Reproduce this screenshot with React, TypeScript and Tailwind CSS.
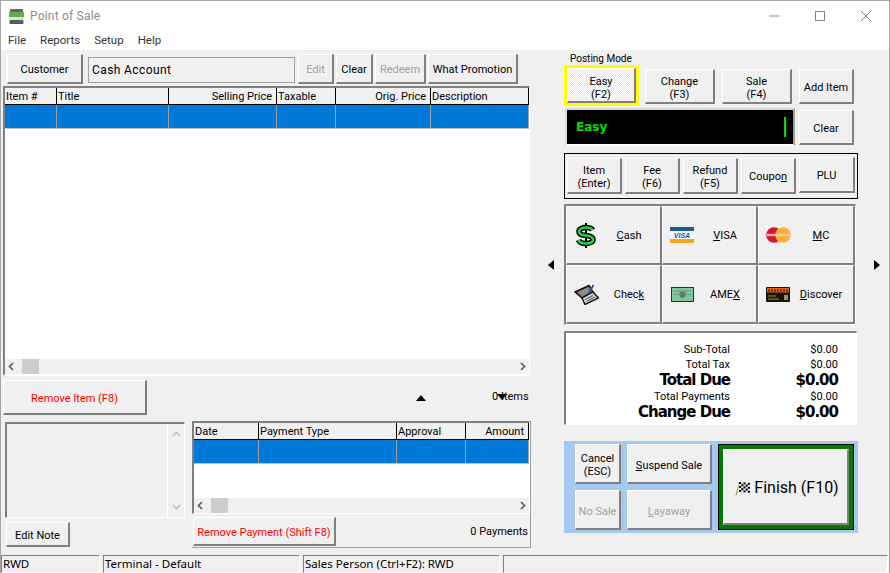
import React from "react";

const raised = "border-t border-l border-b-2 border-r-2 border-t-white border-l-white border-b-[#808080] border-r-[#808080] bg-[#f0f0f0]";
const sunken = "border-t-2 border-l-2 border-b border-r border-t-[#808080] border-l-[#808080] border-b-white border-r-white";

function Btn({ className = "", children, disabled, red }: { className?: string; children: React.ReactNode; disabled?: boolean; red?: boolean }) {
  return (
    <div className={`${raised} flex shrink-0 flex-col items-center justify-center whitespace-nowrap text-center leading-[13px] ${disabled ? "text-[#a0a0a0]" : red ? "text-[#ff0000]" : "text-black"} ${className}`}>
      {children}
    </div>
  );
}

function Chevron({ dir, color = "#606060" }: { dir: "l" | "r" | "u" | "d"; color?: string }) {
  const d = { l: "M6 1 L2.5 4.5 L6 8", r: "M3 1 L6.5 4.5 L3 8", u: "M1 6 L4.5 2.5 L8 6", d: "M1 3 L4.5 6.5 L8 3" }[dir];
  return (
    <svg width="9" height="9" viewBox="0 0 9 9" className="shrink-0">
      <path d={d} fill="none" stroke={color} strokeWidth="1.7" />
    </svg>
  );
}

function HScroll() {
  return (
    <div className="flex h-[15px] shrink-0 items-center bg-[#f0f0f0]">
      <div className="flex w-[17px] justify-center pr-1"><Chevron dir="l" /></div>
      <div className="h-[15px] w-[17px] bg-[#cdcdcd]" />
      <div className="flex-1" />
      <div className="flex w-[17px] justify-center pl-1"><Chevron dir="r" /></div>
    </div>
  );
}

function GridTable({ cols, bodyH }: { cols: { t: string; w: number; right?: boolean }[]; bodyH: number }) {
  return (
    <div className="flex min-h-0 flex-1 flex-col bg-white">
      <div className="flex h-[17px] shrink-0 border-b border-black bg-[#f0f0f0] text-[11px]">
        {cols.map((c) => (
          <div key={c.t} style={{ width: c.w }} className={`overflow-hidden border-r border-r-black pt-[1px] pr-[4px] pl-[1px] leading-[16px] whitespace-nowrap ${c.right ? "text-right" : ""}`}>
            {c.t}
          </div>
        ))}
      </div>
      <div style={{ height: bodyH }} className="flex shrink-0 border-b border-[#c0c0c0] bg-[#0078d7]">
        {cols.map((c) => (
          <div key={c.t} style={{ width: c.w }} className="border-r border-r-[#a0a0a0]" />
        ))}
      </div>
      <div className="flex-1" />
    </div>
  );
}

function DollarIcon() {
  const s = "M17.5 7C16.5 5 14 4.5 11 4.5C7 4.5 4 6 4 8.5C4 11.5 7 12 11 12.5C15 13 18 14 18 16.5C18 19 15 20.5 11 20.5C7 20.5 4.5 19.5 3.5 17";
  return (
    <svg width="22" height="25" viewBox="0 0 22 25">
      <path d="M11 0V25" stroke="#000" strokeWidth="2" />
      <path d={s} fill="none" stroke="#000" strokeWidth="5.5" />
      <path d={s} fill="none" stroke="#18d83c" strokeWidth="2.6" />
    </svg>
  );
}
function VisaIcon() {
  return (
    <svg width="24" height="16" viewBox="0 0 24 16">
      <rect width="24" height="16" fill="#f4f6f8" />
      <rect width="24" height="4" fill="#1a5a96" />
      <rect y="12" width="24" height="4" fill="#f2a71e" />
      <text x="12" y="11" textAnchor="middle" fontSize="7" fontWeight="700" fontStyle="italic" fill="#1a5a96" fontFamily="Liberation Sans, sans-serif">VISA</text>
    </svg>
  );
}
function McIcon() {
  return (
    <svg width="25" height="16" viewBox="0 0 25 16">
      <circle cx="8" cy="8" r="7.8" fill="#d8143a" />
      <circle cx="17" cy="8" r="7.8" fill="#fbb12e" />
      <rect x="1" y="6.8" width="23" height="2.4" fill="#f7c8b8" opacity="0.85" />
    </svg>
  );
}
function CheckIcon() {
  return (
    <svg width="25" height="21" viewBox="0 0 25 21">
      <path d="M1 8L15 1.5L19 8L8 14Z" fill="#6a6a6a" stroke="#111" strokeWidth="1.4" />
      <path d="M4 8L14 3.5L16.5 7.5L8 12Z" fill="#8f8f8f" />
      <path d="M8 14L19 8L24.5 14L11 20.5Z" fill="#cfcfcf" stroke="#111" strokeWidth="1.4" />
      <path d="M11 15.5L19 11.5M13 17L21 13" stroke="#555" />
      <path d="M19.5 1L14.5 9.5" stroke="#2b55b5" strokeWidth="1.8" />
    </svg>
  );
}
function AmexIcon() {
  return (
    <svg width="23" height="15" viewBox="0 0 23 15">
      <rect x="0.5" y="0.5" width="22" height="14" fill="#82c49a" stroke="#23372c" />
      <circle cx="11.5" cy="7.5" r="3.2" fill="#5d7f70" />
      <path d="M3 7.5H7.5M15.5 7.5H20M3 4H20" stroke="#5fa27c" />
    </svg>
  );
}
function DiscoverIcon() {
  return (
    <svg width="24" height="15" viewBox="0 0 24 15">
      <rect width="24" height="15" rx="1" fill="#1a1410" />
      <rect x="1" y="1" width="22" height="4.5" fill="#e0641e" />
      <path d="M3 2V5M6 2V5M9 2V5M12 2V5M15 2V5M18 2V5M21 2V5" stroke="#1a1410" />
      <rect x="18" y="8" width="4" height="5" fill="#8a9a70" />
      <path d="M2 9H10M2 12H13" stroke="#b08a40" />
    </svg>
  );
}
function FlagIcon() {
  const cells: React.ReactNode[] = [];
  for (let r = 0; r < 5; r++) for (let c = 0; c < 5; c++) if ((r + c) % 2 === 0) cells.push(<rect key={`${r}-${c}`} x={4 + c * 2.2} y={1 + r * 2 + c * 0.2} width="2.2" height="2" fill="#111" />);
  return (
    <svg width="15" height="15" viewBox="0 0 15 15">
      <path d="M1 14.5L4.5 1" stroke="#8a8a20" strokeWidth="1" />
      <path d="M4.2 1L15 2V12L2.8 10Z" fill="#e8e8e8" />
      {cells}
    </svg>
  );
}
function AppIcon() {
  return (
    <svg width="17" height="17" viewBox="0 0 17 17">
      <rect x="2" y="1" width="13" height="4" rx="1" fill="#666" />
      <rect x="1" y="4" width="15" height="5" fill="#5fb04a" />
      <rect x="1" y="9" width="15" height="3" fill="#e4e4b0" />
      <rect x="1.5" y="12" width="14" height="4" rx="1" fill="#50586a" />
      <rect x="9.5" y="12.5" width="5" height="2" fill="#3a66b0" />
    </svg>
  );
}

function PayCell({ icon, label }: { icon: React.ReactNode; label: React.ReactNode }) {
  return (
    <div className={`${raised} flex items-center`}>
      <div className="flex w-[38px] shrink-0 justify-center">{icon}</div>
      <div className="flex w-[48px] shrink-0 justify-center pt-[2px] whitespace-nowrap">{label}</div>
    </div>
  );
}

function TotalRow({ label, value, big }: { label: string; value: string; big?: boolean }) {
  return (
    <div className={`flex ${big ? "h-[17px] font-['DejaVu_Sans',sans-serif] text-[15px] leading-[17px] font-bold tracking-[-1px]" : "h-[15px] leading-[15px]"}`}>
      <div className="w-[164px] text-right whitespace-nowrap">{label}</div>
      <div className="w-[108px] text-right whitespace-nowrap">{value}</div>
    </div>
  );
}

const itemCols = [
  { t: "Item #", w: 52 },
  { t: "Title", w: 112 },
  { t: "Selling Price", w: 108, right: true },
  { t: "Taxable", w: 59 },
  { t: "Orig. Price", w: 95, right: true },
  { t: "Description", w: 98 },
];
const payCols = [
  { t: "Date", w: 65 },
  { t: "Payment Type", w: 138 },
  { t: "Approval", w: 69 },
  { t: "Amount", w: 63, right: true },
];

export default function App() {
  return (
    <div className="flex h-[573px] w-[890px] flex-col overflow-hidden border border-b-0 border-[#a6a6a6] bg-[#f0f0f0] font-['Roboto',sans-serif] text-[11px] text-black">
      {/* Title + menu */}
      <div className="h-[49px] shrink-0 bg-white">
        <div className="flex h-[30px] items-center pl-[7px]">
          <AppIcon />
          <span className="ml-[5px] text-[12px] tracking-[0.2px] text-[#8c8c8c]">Point of Sale</span>
          <div className="ml-auto flex items-center">
            <svg width="12" height="12" viewBox="0 0 12 12" className="mr-[34px]"><path d="M1 6H11" stroke="#888" /></svg>
            <svg width="12" height="12" viewBox="0 0 12 12" className="mr-[34px]"><rect x="1.5" y="1.5" width="9" height="9" fill="none" stroke="#888" /></svg>
            <svg width="12" height="12" viewBox="0 0 12 12" className="mr-[17px]"><path d="M1 1L11 11M11 1L1 11" stroke="#888" /></svg>
          </div>
        </div>
        <div className="flex h-[20px] items-center gap-[14px] pl-[7px] text-[11.5px] text-[#333]">
          <span>File</span><span>Reports</span><span>Setup</span><span>Help</span>
        </div>
      </div>

      {/* Main */}
      <div className="flex min-h-0 flex-1">
        {/* Left */}
        <div className="ml-[2px] w-[528px] shrink-0">
          <div className="mt-[4px] flex h-[30px] pl-[4px]">
            <Btn className="h-[30px] w-[76px] pt-[2px]">Customer</Btn>
            <div className="mt-[3px] ml-[5px] flex h-[26px] w-[207px] items-center border border-[#a0a0a0] bg-[#f0f0f0] pl-[3px] text-[12px] tracking-[0.4px]">Cash Account</div>
            <Btn disabled className="ml-[3px] h-[30px] w-[36px] pt-[2px]">Edit</Btn>
            <Btn className="ml-[2px] h-[30px] w-[37px] pt-[2px]">Clear</Btn>
            <Btn disabled className="ml-[2px] h-[30px] w-[51px] pt-[2px]">Redeem</Btn>
            <Btn className="ml-[2px] h-[30px] w-[90px] pt-[2px]">What Promotion</Btn>
          </div>

          <div className={`${sunken} mt-[2px] flex h-[290px] w-[527px] flex-col !border-b-2`}>
            <GridTable cols={itemCols} bodyH={24} />
            <HScroll />
          </div>

          <div className="mt-[4px] flex h-[35px] items-center">
            <Btn red className="h-[35px] w-[144px] pt-[2px]">Remove Item (F8)</Btn>
            <svg width="10" height="6" viewBox="0 0 10 6" className="ml-[269px]"><path d="M0 6L5 0L10 6Z" fill="#000" /></svg>
            <div className="relative ml-[66px] whitespace-nowrap">
              0 Items
              <svg width="10" height="6" viewBox="0 0 10 6" className="absolute top-[5px] left-[5px]"><path d="M0 0L5 6L10 0Z" fill="#000" /></svg>
            </div>
          </div>

          <div className="mt-[6px] flex">
            <div className="mt-[1px] ml-[2px] w-[180px] shrink-0">
              <div className={`${sunken} flex h-[96px] justify-end`}>
                <div className="flex w-[17px] flex-col items-center justify-between border-l border-white py-[6px]">
                  <Chevron dir="u" color="#c0c0c0" />
                  <Chevron dir="d" color="#c0c0c0" />
                </div>
              </div>
              <Btn className="mt-[4px] ml-[1px] h-[25px] w-[64px] pt-[2px]">Edit Note</Btn>
            </div>
            <div className="ml-[7px] flex h-[127px] w-[339px] flex-col border-r border-b border-[#a0a0a0]">
              <div className={`${sunken} flex h-[93px] shrink-0 flex-col`}>
                <GridTable cols={payCols} bodyH={24} />
                <HScroll />
              </div>
              <div className="mt-[3px] flex items-start">
                <Btn red className="ml-[1px] h-[29px] w-[143px] pt-[2px]">Remove Payment (Shift F8)</Btn>
                <div className="ml-auto pt-[7px] pr-[2px]">0 Payments</div>
              </div>
            </div>
          </div>
        </div>

        {/* Arrow left */}
        <div className="w-[33px] shrink-0 pt-[210px] pl-[17px]">
          <svg width="6" height="10" viewBox="0 0 6 10"><path d="M6 0L0 5L6 10Z" fill="#000" /></svg>
        </div>

        {/* Right */}
        <div className="w-[294px] shrink-0">
          <div className="h-[15px] pt-[3px] pl-[6px] text-[10px] leading-[12px]">Posting Mode</div>
          <div className="flex h-[41px] items-start">
            <div className="h-[41px] w-[75px] shrink-0 border-[3px] border-[#ffff00]">
              <Btn className="h-full w-full bg-[repeating-conic-gradient(#ffffff_0_25%,#e6e6e6_0_50%)] bg-[length:2px_2px] pt-[6px]">Easy<br />(F2)</Btn>
            </div>
            <Btn className="mt-[4px] ml-[6px] h-[35px] w-[70px] pt-[4px]">Change<br />(F3)</Btn>
            <Btn className="mt-[4px] ml-[7px] h-[35px] w-[70px] pt-[4px]">Sale<br />(F4)</Btn>
            <Btn className="mt-[4px] ml-[7px] h-[35px] w-[55px] pt-[2px]">Add Item</Btn>
          </div>
          <div className="mt-[2px] flex h-[38px]">
            <div className="ml-[1px] flex h-[38px] w-[230px] items-center border-2 border-t-[#d8d8d8] border-r-[#a0a0a0] border-b-white border-l-[#d8d8d8] bg-black pr-[7px] pl-[9px]">
              <span className="font-['DejaVu_Sans',sans-serif] text-[12px] font-bold text-[#00e000]">Easy</span>
              <div className="ml-auto h-[20px] w-[2px] bg-[#00e000]" />
            </div>
            <Btn className="mt-[2px] ml-[4px] h-[35px] w-[55px] pt-[2px]">Clear</Btn>
          </div>
          <div className="mt-[7px] flex h-[46px] w-[294px] items-center border border-black pl-[2px]">
            <Btn className="h-[36px] w-[55px] pt-[2px]">Item<br />(Enter)</Btn>
            <Btn className="ml-[3px] h-[36px] w-[55px] pt-[2px]">Fee<br />(F6)</Btn>
            <Btn className="ml-[3px] h-[36px] w-[55px] pt-[2px]">Refund<br />(F5)</Btn>
            <Btn className="ml-[3px] h-[36px] w-[55px] pt-[2px]"><span>Coupo<u>n</u></span></Btn>
            <Btn className="mb-[2px] ml-[3px] h-[36px] w-[56px] pt-[2px]">PLU</Btn>
          </div>

          <div className={`${sunken} mt-[5px] grid h-[121px] w-[292px] grid-cols-[96px_96px_97px] grid-rows-[59px_59px]`}>
            <PayCell icon={<DollarIcon />} label={<span><u>C</u>ash</span>} />
            <PayCell icon={<VisaIcon />} label={<span><u>V</u>ISA</span>} />
            <PayCell icon={<McIcon />} label={<span><u>M</u>C</span>} />
            <PayCell icon={<CheckIcon />} label={<span>Chec<u>k</u></span>} />
            <PayCell icon={<AmexIcon />} label={<span>AME<u>X</u></span>} />
            <PayCell icon={<DiscoverIcon />} label={<span><u>D</u>iscover</span>} />
          </div>

          <div className={`${sunken} mt-[6px] h-[94px] w-[293px] bg-white pt-[9px]`}>
            <TotalRow label="Sub-Total" value="$0.00" />
            <TotalRow label="Total Tax" value="$0.00" />
            <TotalRow label="Total Due" value="$0.00" big />
            <TotalRow label="Total Payments" value="$0.00" />
            <TotalRow label="Change Due" value="$0.00" big />
          </div>

          <div className="mt-[16px] flex h-[92px] w-[294px] bg-[#a5c9ef] pt-[3px]">
            <div className="ml-[11px] grid h-[86px] w-[137px] grid-cols-[46px_85px] grid-rows-[40px_40px] gap-x-[6px] gap-y-[6px]">
              <Btn className="pt-[2px]">Cancel<br />(ESC)</Btn>
              <Btn className="pt-[3px]"><span><u>S</u>uspend Sale</span></Btn>
              <Btn disabled className="pt-[3px]">No Sale</Btn>
              <Btn disabled className="pt-[3px]"><span><u>L</u>ayaway</span></Btn>
            </div>
            <div className="ml-[6px] h-[86px] w-[136px] border border-black bg-[#007a00] p-[4px]">
              <Btn className="h-full w-full pt-[3px] pl-[3px]">
                <div className="flex items-center gap-[4px] text-[16px] leading-[20px]">
                  <FlagIcon />
                  <span>Finish (F10)</span>
                </div>
              </Btn>
            </div>
          </div>
        </div>

        {/* Arrow right */}
        <div className="flex-1 pt-[210px] pl-[16px]">
          <svg width="6" height="10" viewBox="0 0 6 10"><path d="M0 0L6 5L0 10Z" fill="#000" /></svg>
        </div>
      </div>

      {/* Status bar */}
      <div className="flex h-[18px] shrink-0 gap-[3px] pr-[1px] font-['Noto_Sans',sans-serif] text-[11.5px] leading-[16px]">
        <div className={`${sunken} w-[99px] !border-t !border-l pl-[1px] whitespace-nowrap`}>RWD</div>
        <div className={`${sunken} w-[197px] !border-t !border-l pl-[1px] whitespace-nowrap`}>Terminal - Default</div>
        <div className={`${sunken} w-[197px] !border-t !border-l pl-[1px] whitespace-nowrap`}>Sales Person (Ctrl+F2): RWD</div>
        <div className={`${sunken} flex-1 !border-t !border-l`} />
      </div>
    </div>
  );
}
